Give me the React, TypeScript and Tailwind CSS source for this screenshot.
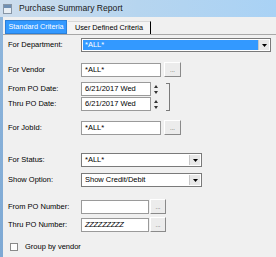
import React from "react";

const font = { fontFamily: '"Liberation Sans", Arial, sans-serif' };

function DownArrow() {
  return (
    <svg width="5" height="3" viewBox="0 0 5 3">
      <path d="M0 0H5L2.5 3Z" fill="#000" />
    </svg>
  );
}

function Combo({ value, highlight, w }: { value: string; highlight?: boolean; w: string }) {
  return (
    <div className={`flex h-[14px] ${w} border border-[#7a7a7a] bg-white p-[1px]`}>
      <div
        className={`flex flex-1 items-center pl-[2px] text-[7.5px] leading-none ${
          highlight ? "bg-[#3399ff] text-white" : "text-black"
        }`}
      >
        {value}
      </div>
      <div className="flex w-[11px] items-center justify-center border-l border-[#c8c8c8] bg-[#e8e8e8]">
        <DownArrow />
      </div>
    </div>
  );
}

function TextBox({ value, w, italic }: { value: string; w: string; italic?: boolean }) {
  return (
    <div
      className={`flex h-[14px] ${w} items-center border border-[#9a9a9a] bg-white pl-[3px] text-[7.5px] leading-none text-black ${
        italic ? "italic tracking-[-0.3px]" : ""
      }`}
    >
      {value}
    </div>
  );
}

function Dots({ w }: { w: string }) {
  return (
    <div
      className={`flex h-[15px] ${w} items-end justify-center border border-t-white border-l-white border-r-[#8a8a8a] border-b-[#8a8a8a] bg-[#ececec] pb-[3px] text-[6px] leading-none text-[#444]`}
    >
      ...
    </div>
  );
}

function Spinner() {
  return (
    <div className="flex h-[14px] w-[9px] flex-col items-center justify-center gap-[3px]">
      <svg width="4" height="3" viewBox="0 0 4 3">
        <path d="M0 3H4L2 0Z" fill="#333" />
      </svg>
      <svg width="4" height="3" viewBox="0 0 4 3">
        <path d="M0 0H4L2 3Z" fill="#333" />
      </svg>
    </div>
  );
}

function Label({ children }: { children: React.ReactNode }) {
  return <div className="w-[73px] shrink-0 text-[7.5px] leading-none text-black">{children}</div>;
}

export default function App() {
  return (
    <div className="flex h-[257px] w-[276px] overflow-hidden bg-[#f0f0f0]" style={font}>
      <div className="flex w-full flex-col">
        {/* Title bar */}
        <div className="flex h-[17px] items-center bg-gradient-to-r from-[#cddded] via-[#b6d5ef] to-[#a9d2f5] pl-[3px]">
          <div className="flex h-[10px] w-[9px] flex-col border border-[#8896a6] bg-[#e8eef4]">
            <div className="h-[3px] bg-[#6f8fb3]" />
          </div>
          <div className="ml-[7px] text-[8.6px] leading-none text-[#1a1a1a]">Purchase Summary Report</div>
        </div>
        <div className="flex flex-1">
          {/* left frame */}
          <div className="w-[3px] bg-gradient-to-b from-[#8fb6dc] to-[#7ea9d4]" />
          <div className="flex flex-1 flex-col">
            {/* Tabs */}
            <div className="flex h-[17px] items-end bg-[#f0f0f0] pl-[2px]">
              <div className="flex h-[14px] w-[62px] items-center justify-center border border-[#2a7fd8] bg-[#3399ff] text-[7.3px] leading-none text-white">
                Standard Criteria
              </div>
              <div className="ml-[1px] flex h-[13px] w-[83px] items-center justify-center border-r-[1.5px] border-r-black border-t border-t-[#d8d8d8] bg-[#f4f4f4] text-[7.3px] leading-none text-black">
                User Defined Criteria
              </div>
            </div>
            {/* panel */}
            <div className="flex flex-1 flex-col border-t border-[#a8a8a8] pl-[5px]">
              <div className="mt-[3px] flex items-center">
                <Label>For Department:</Label>
                <Combo value="*ALL*" highlight w="w-[190px]" />
              </div>
              <div className="mt-[10px] flex items-center">
                <Label>For Vendor</Label>
                <TextBox value="*ALL*" w="w-[80px]" />
                <div className="ml-[3px]">
                  <Dots w="w-[17px]" />
                </div>
              </div>
              <div className="mt-[5px] flex">
                <div className="flex flex-col gap-[1px]">
                  <div className="flex items-center">
                    <Label>From PO Date:</Label>
                    <TextBox value="6/21/2017 Wed" w="w-[70px]" />
                    <Spinner />
                  </div>
                  <div className="flex items-center">
                    <Label>Thru PO Date:</Label>
                    <TextBox value="6/21/2017 Wed" w="w-[70px]" />
                    <Spinner />
                  </div>
                </div>
                <div className="ml-[6px] mt-[1px] h-[28px] w-[4px] border border-l-0 border-[#7a7a7a]" />
              </div>
              <div className="mt-[9px] flex items-center">
                <Label>For JobId:</Label>
                <TextBox value="*ALL*" w="w-[80px]" />
                <div className="ml-[3px]">
                  <Dots w="w-[17px]" />
                </div>
              </div>
              <div className="mt-[18px] flex items-center">
                <Label>For Status:</Label>
                <Combo value="*ALL*" w="w-[121px]" />
              </div>
              <div className="mt-[6px] flex items-center">
                <Label>Show Option:</Label>
                <Combo value="Show Credit/Debit" w="w-[121px]" />
              </div>
              <div className="mt-[12px] flex items-center">
                <Label>From PO Number:</Label>
                <TextBox value="" w="w-[68px]" />
                <div className="ml-[1px]">
                  <Dots w="w-[16px]" />
                </div>
              </div>
              <div className="mt-[3px] flex items-center">
                <Label>Thru PO Number:</Label>
                <TextBox value="ZZZZZZZZZ" italic w="w-[68px]" />
                <div className="ml-[1px]">
                  <Dots w="w-[16px]" />
                </div>
              </div>
              <div className="mt-[11px] flex items-center">
                <div className="ml-[2px] h-[8px] w-[8px] border border-[#8a8a8a] bg-white" />
                <div className="ml-[7px] text-[7.5px] leading-none text-black">Group by vendor</div>
              </div>
            </div>
          </div>
        </div>
      </div>
    </div>
  );
}
